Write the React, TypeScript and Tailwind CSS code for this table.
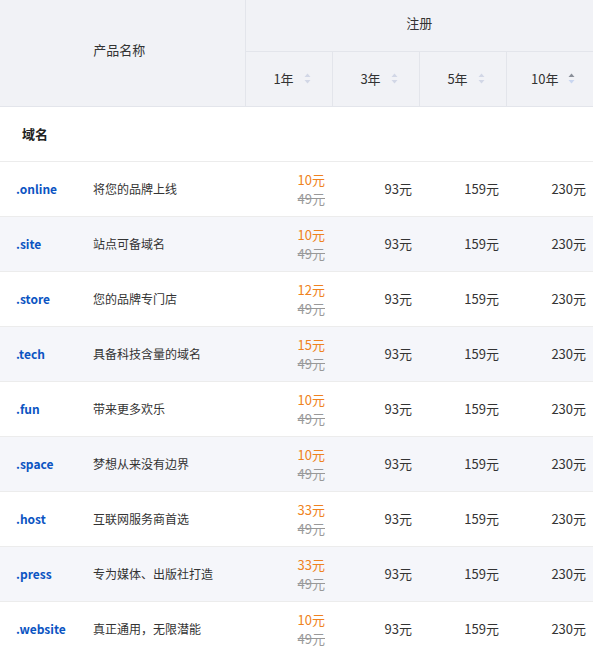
import React from "react";

const rows = [
  { name: ".online", desc: "将您的品牌上线", price: "10元" },
  { name: ".site", desc: "站点可备域名", price: "10元" },
  { name: ".store", desc: "您的品牌专门店", price: "12元" },
  { name: ".tech", desc: "具备科技含量的域名", price: "15元" },
  { name: ".fun", desc: "带来更多欢乐", price: "10元" },
  { name: ".space", desc: "梦想从来没有边界", price: "10元" },
  { name: ".host", desc: "互联网服务商首选", price: "33元" },
  { name: ".press", desc: "专为媒体、出版社打造", price: "33元" },
  { name: ".website", desc: "真正通用，无限潜能", price: "10元" },
];

const SortIcon = ({ active }: { active?: boolean }) => (
  <svg width="7" height="11" viewBox="0 0 7 11" className="ml-[10px] inline-block">
    <path d="M3.5 0.5 L6.5 4 L0.5 4 Z" fill={active ? "#8a8f99" : "#d2d7e6"} />
    <path d="M3.5 10.5 L6.5 7 L0.5 7 Z" fill={active ? "#c9d6f0" : "#d2d7e6"} />
  </svg>
);

export default function App() {
  return (
    <div className="w-[593px] h-[650px] overflow-hidden bg-white text-[#333] font-['Noto_Sans_CJK_SC','Noto_Sans',sans-serif]">
      <table className="w-[593px] table-fixed border-collapse">
        <colgroup>
          <col className="w-[85px]" />
          <col className="w-[160px]" />
          <col className="w-[87px]" />
          <col className="w-[87px]" />
          <col className="w-[87px]" />
          <col className="w-[87px]" />
        </colgroup>
        <thead className="bg-[#f1f2f6] text-[13px] text-[#333]">
          <tr className="h-[51px]">
            <th colSpan={2} rowSpan={2} className="font-normal border-r border-b border-[#e3e5eb] pr-[6px] pb-[6px]">
              产品名称
            </th>
            <th colSpan={4} className="font-normal border-b border-[#e3e5eb] pb-[6px]">
              注册
            </th>
          </tr>
          <tr className="h-[55px]">
            {["1年", "3年", "5年", "10年"].map((y, i) => (
              <th
                key={y}
                className={`font-normal border-b border-[#e3e5eb] pl-[7px] ${i < 3 ? "border-r" : ""}`}
              >
                <span className="inline-flex items-center">
                  {y}
                  <SortIcon active={i === 3} />
                </span>
              </th>
            ))}
          </tr>
        </thead>
        <tbody className="text-[13px]">
          <tr className="h-[55px] border-b border-[#ececec]">
            <td colSpan={6} className="pl-[22px] font-bold text-[13px] text-[#222]">
              域名
            </td>
          </tr>
          {rows.map((r, i) => (
            <tr
              key={r.name}
              className={`h-[55px] border-b border-[#ececec] ${i % 2 === 1 ? "bg-[#f5f6fa]" : "bg-white"}`}
            >
              <td className="pl-[16px] text-[12px] font-bold text-[#0b54c2]">{r.name}</td>
              <td className="pl-[8px] text-[12px] text-[#333]">{r.desc}</td>
              <td className="pr-[7px] text-right">
                <div className="flex flex-col items-end leading-[19px]">
                  <span className="text-[#ef8220]">{r.price}</span>
                  <span className="text-[#999] line-through">49元</span>
                </div>
              </td>
              <td className="pr-[7px] text-right">93元</td>
              <td className="pr-[7px] text-right">159元</td>
              <td className="pr-[7px] text-right">230元</td>
            </tr>
          ))}
        </tbody>
      </table>
    </div>
  );
}
